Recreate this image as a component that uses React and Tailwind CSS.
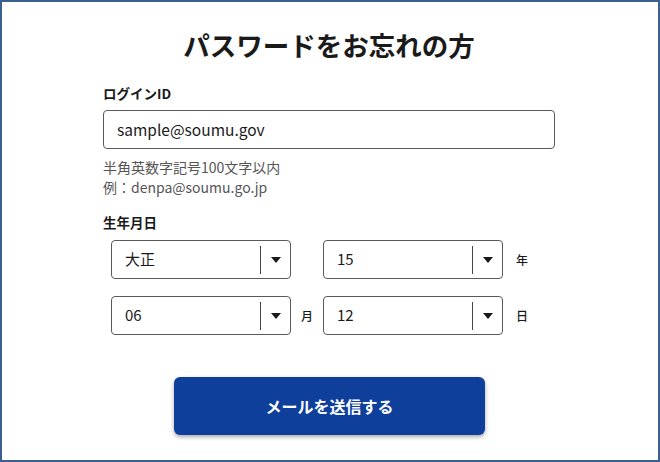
import React from 'react';

const Select = ({ value }) => (
  <div className="w-[180px] h-[39px] border border-[#5a5a5a] rounded-[4px] bg-white flex items-center">
    <span className="flex-1 pl-[13px] text-[15px] text-[#1a1a1a]">{value}</span>
    <span className="w-px h-[28px] bg-[#444]" />
    <span className="w-[29px] flex justify-center">
      <svg width="10" height="6" viewBox="0 0 10 6">
        <path d="M0 0 L10 0 L5 6 Z" fill="#1a1a1a" />
      </svg>
    </span>
  </div>
);

export default function App() {
  return (
    <div className="w-[660px] h-[462px] border-2 border-[#3b5f8e] bg-white text-[#1a1a1a] font-['Noto_Sans_CJK_JP','Noto_Sans',sans-serif] overflow-hidden">
      <div className="w-[452px] ml-[101px] pt-[25px]">
        {/* Title */}
        <h1 className="text-[26.5px] leading-[36px] font-bold text-center text-[#1a1a1a]">
          パスワードをお忘れの方
        </h1>

        {/* Login ID */}
        <div className="mt-[20px] text-[13.5px] leading-[20px] font-bold">ログインID</div>
        <div className="mt-[7px] h-[39px] border border-[#5a5a5a] rounded-[4px] flex items-center px-[13px] text-[15.5px]">
          sample@soumu.gov
        </div>
        <div className="mt-[8px] text-[14px] leading-[20px] text-[#555]">
          <p>半角英数字記号100文字以内</p>
          <p>例：denpa@soumu.go.jp</p>
        </div>

        {/* Birthday */}
        <div className="mt-[15px] text-[13.5px] leading-[20px] font-bold">生年月日</div>
        <div className="mt-[8px] pl-[8px] flex flex-col gap-[17px]">
          <div className="flex items-center">
            <Select value="大正" />
            <span className="w-[32px]" />
            <Select value="15" />
            <span className="ml-[13px] text-[12px] font-medium">年</span>
          </div>
          <div className="flex items-center">
            <Select value="06" />
            <span className="w-[32px] text-center text-[12px] font-medium">月</span>
            <Select value="12" />
            <span className="ml-[13px] text-[12px] font-medium">日</span>
          </div>
        </div>

        {/* Submit */}
        <button className="mt-[42px] ml-[71px] w-[311px] h-[58px] rounded-[6px] bg-[#0d3f9b] text-white text-[16px] font-bold shadow-[0_2px_4px_rgba(0,0,0,0.35)] block">
          メールを送信する
        </button>
      </div>
    </div>
  );
}
